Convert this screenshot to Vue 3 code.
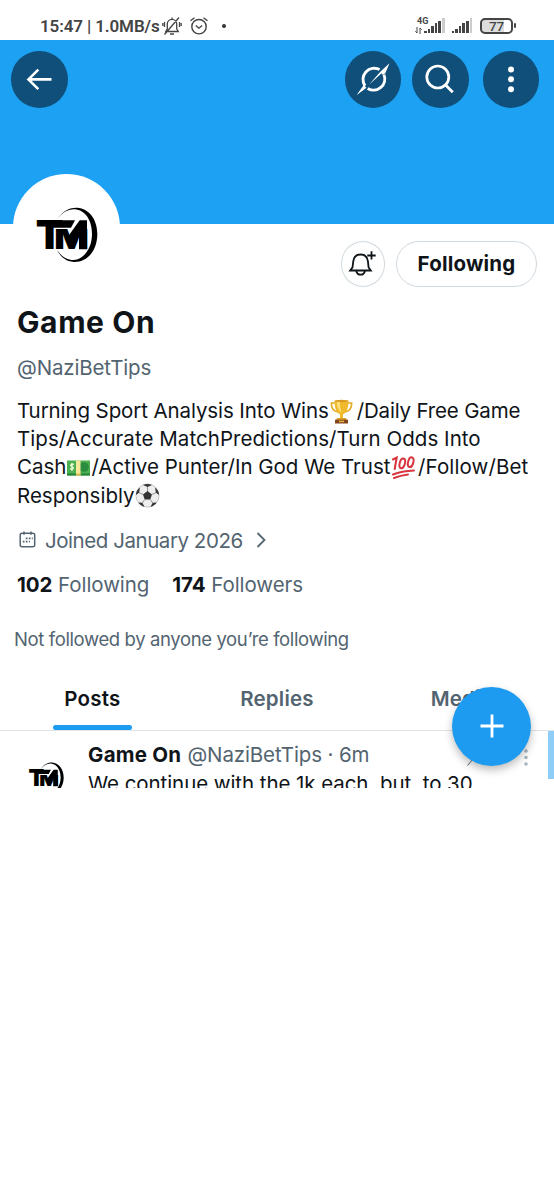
<script setup>
const signal = [2, 4, 7, 10, 12.5]
</script>

<template>
  <main class="screen">
    <svg width="0" height="0" class="defs">
      <symbol id="tm-logo" viewBox="100 135 200 175">
        <text class="logo-t" x="108" y="268" textLength="83" lengthAdjust="spacingAndGlyphs">T</text>
        <path d="M150 181H226L214 203H150Z" />
        <text class="logo-m" x="164" y="268" textLength="104" lengthAdjust="spacingAndGlyphs">M</text>
        <path d="M240 181H262V268H238V222L215 250L204 231L212 220Z" />
        <path d="M172 178C190 150 215 142 232 143C270 146 293 180 293 222C293 270 265 306 225 306C200 306 182 290 172 270C190 295 205 300 222 300C255 298 277 262 277 222C277 180 256 150 225 148C205 147 188 158 172 178Z" />
      </symbol>
    </svg>

    <div class="status">
      <span class="clock">15:47 | 1.0MB/s</span>
      <svg class="mute" width="20" height="20" viewBox="0 0 20 20" fill="none" stroke="#444" stroke-width="1.3">
        <path d="M3.8 15.5h12.5l-1.6-2.7V8a4.7 4.7 0 0 0-9.4 0v4.8zM10 3.2V1.5M8 18h4M17 1.5 2.5 18.5M2.5 6v5M.8 7v3M17.5 6v5M19.2 7v3" />
      </svg>
      <svg class="alarm" width="20" height="20" viewBox="0 0 20 20" fill="none" stroke="#444" stroke-width="1.4">
        <circle cx="10" cy="10.7" r="7.2" /><path d="m6.8 9.5 3.1 2.7 3.3-2.7M1.5 4.8 5.5 1.7M18.5 4.8l-4-3.1" />
      </svg>
      <i class="notice"></i>
      <div class="network"><b>4G</b>
        <svg width="7" height="7" viewBox="0 0 7 7" fill="none" stroke="#444"><path d="M2 0v6L.3 4.3M5 7V1l1.7 1.7" /></svg>
      </div>
      <div class="bars one"><i v-for="h in signal" :key="h" :style="{ height: h + 'px' }"></i><i class="off"></i></div>
      <div class="bars two"><i v-for="h in signal" :key="h" :style="{ height: h + 'px' }"></i><i class="off"></i></div>
      <div class="battery"><span>77</span></div>
    </div>

    <header class="banner">
      <button class="round">
        <svg width="56" height="56" viewBox="0 0 56 56" fill="none" stroke="#fff" stroke-width="2.6"><path d="M40.5 28.4H17.5M27.3 18.7 17.5 28.4l9.8 9.7" /></svg>
      </button>
      <button class="round grok">
        <svg width="56" height="56" viewBox="0 0 56 56" fill="none" stroke="#fff" stroke-width="2.9">
          <path d="M20 34.8A11.2 11.2 0 0 1 34.6 18.6M39 23.7A11.2 11.2 0 0 1 22.7 37.4" />
          <path d="M24 33.7 36 20 44.5 12.3 40.2 22.5 37.6 24 36.6 22.3ZM11.5 44.2 18.7 34 21.5 36.8Z" fill="#fff" stroke="none" />
        </svg>
      </button>
      <button class="round search">
        <svg width="56" height="56" viewBox="0 0 56 56" fill="none" stroke="#fff" stroke-width="2.7"><circle cx="25.8" cy="26" r="11" /><path d="m33.8 34.2 7 7" /></svg>
      </button>
      <button class="round more">
        <svg width="56" height="56" viewBox="0 0 56 56" fill="#fff"><circle cx="28" cy="18.5" r="3" /><circle cx="28" cy="28.3" r="3" /><circle cx="28" cy="38.2" r="3" /></svg>
      </button>
      <div class="avatar"><svg width="66.7" height="58.3"><use href="#tm-logo" /></svg></div>
    </header>

    <section class="actions">
      <button class="bell">
        <svg width="44" height="44" viewBox="0 0 44 44" fill="none" stroke="#0f1419" stroke-width="1.8">
          <path d="M9.2 28.5h20.6l-2.2-3.1-.7-6.2c-.6-4.3-3.3-6.7-7.3-6.7s-6.8 2.4-7.3 6.7l-.8 6.2zM15.2 28.7c.6 2.7 2.3 4 4.4 4s3.8-1.3 4.4-4M30.5 9.3v8.3M26.3 13.5h8.4" />
        </svg>
      </button>
      <button class="follow">Following</button>
    </section>

    <section class="profile">
      <h1>Game On</h1>
      <div class="handle">@NaziBetTips</div>
      <div class="bio">
        <p><span class="l1">Turning Sport Analysis Into Wins</span>
          <svg class="emoji trophy" width="25" height="25" viewBox="0 0 25 25">
            <path d="M6.5 4H2.3c0 5.5 2.2 8.4 7 9M18.5 4h4.2c0 5.5-2.2 8.4-7 9" fill="none" stroke="#e3aa26" stroke-width="1.6" />
            <path d="M5.5 1.5h14c0 7-1.5 12.4-5.5 13.8V20h-3v-4.7C7 13.9 5.5 8.5 5.5 1.5z" fill="#f0ba2d" /><path d="M8 2.5h3c0 5 .3 8 1.5 11C9.2 11.5 8 8 8 2.5z" fill="#ffe17c" />
            <ellipse cx="12.5" cy="2" rx="7" ry="1.2" fill="#d99b22" /><path d="M8 19h9l1 2H7z" fill="#dca12b" /><path d="M6 20.7h13V24.5H6z" fill="#85451c" /><path d="M10 21.7h5v1.5h-5z" fill="#e4b743" />
          </svg><span class="r1">/Daily Free Game</span></p>
        <p><span class="l2">Tips/Accurate MatchPredictions/Turn Odds Into</span></p>
        <p><span class="l3">Cash</span>
          <svg class="emoji" width="25" height="25" viewBox="0 0 25 25">
            <path d="M1 5.5h23v15H1z" fill="#4caf50" /><path d="M1 18.5h23v2H1z" fill="#27853d" /><circle cx="18" cy="12" r="4.8" fill="#298c3f" /><path d="M10 5.5h4.5v15H10z" fill="#f9e89b" /><path d="M10 18.5h4.5v2H10z" fill="#dabc53" />
            <path d="M8 9.5c-3-1.5-4.5 1-2 2.2s1.5 3.4-2 2M6 8v8" fill="none" stroke="#e9f6d2" stroke-width="1.3" />
          </svg><span class="m3">/Active Punter/In God We Trust</span>
          <svg class="emoji hundred" width="25" height="25" viewBox="0 0 25 25" fill="none" stroke="#d7353f" stroke-width="2" stroke-linecap="round">
            <path d="M2 4.5 5.7 2.5 3.7 14" /><ellipse cx="11.3" cy="8.4" rx="2.6" ry="5" transform="rotate(15 11.3 8.4)" /><ellipse cx="19.7" cy="7.2" rx="2.6" ry="5" transform="rotate(15 19.7 7.2)" /><path d="M2 19.5c6-2.5 13-3.7 21-4M3 23c4-1.7 9-3 14-3.6" />
          </svg><span class="r3">/Follow/Bet</span></p>
        <p><span class="l4">Responsibly</span>
          <svg class="emoji" width="25" height="25" viewBox="0 0 25 25">
            <circle cx="12.5" cy="12.5" r="11.6" fill="#eee" stroke="#999" stroke-width=".5" />
            <path d="m12.5 8 4.5 3.4-1.7 5.2H9.7L8 11.4zM8 1.9l4.5 2 4.5-2c-3-1.3-6-1.3-9 0zM1 12l3.2-2.4.7-5C2 7 1 9.5 1 12zM24 12l-3.2-2.4-.7-5C23 7 24 9.5 24 12zM3.3 19.5l4 .3 2.2 4c-2.5-.6-4.7-2-6.2-4.3zM21.7 19.5l-4 .3-2.2 4c2.5-.6 4.7-2 6.2-4.3z" fill="#333" />
            <path d="M12.5 3.5V8M8 11.4 4 9.7M17 11.4l4-1.7M9.7 16.6l-2.5 3.5M15.3 16.6l2.5 3.5" stroke="#777" stroke-width=".8" />
          </svg></p>
      </div>
      <div class="joined">
        <svg width="18" height="18" viewBox="0 0 18 18" fill="none" stroke="#536471" stroke-width="1.5"><rect x="1.2" y="2.3" width="14.5" height="13.5" rx="2" /><path d="M5 .5v3.2M12 .5v3.2" /><path d="M6.8 7.3h7M3.8 10.7h7" stroke-dasharray="1.7 1.3" stroke-width="1.7" /></svg>
        <span>Joined January 2026</span>
        <svg class="chevron" width="10" height="16" viewBox="0 0 10 16" fill="none" stroke="#536471" stroke-width="1.8"><path d="m1.5 1 7 7-7 7" /></svg>
      </div>
      <div class="counts"><span class="c1"><b>102</b> Following</span><span class="c2"><b>174</b> Followers</span></div>
      <div class="mutual">Not followed by anyone you’re following</div>
    </section>

    <nav class="tabs">
      <div class="tab active">Posts</div>
      <div class="tab replies">Replies</div>
      <div class="tab media">Media</div>
    </nav>

    <article class="post">
      <svg class="mini" width="38" height="33.3"><use href="#tm-logo" /></svg>
      <div class="content">
        <div class="author"><b>Game On</b><span>@NaziBetTips · 6m</span></div>
        <div class="message">We continue with the 1k each..but, to 30</div>
      </div>
      <svg class="slash" width="6" height="8" viewBox="0 0 6 8"><path d="M.5 7.5 6 1" stroke="#536471" stroke-width="1" /></svg>
      <svg class="dots" width="4" height="20" viewBox="0 0 4 20" fill="#aab6c0"><circle cx="2" cy="4" r="1.8" /><circle cx="2" cy="10.5" r="1.8" /><circle cx="2" cy="17" r="1.8" /></svg>
      <i class="edge"></i>
    </article>
    <button class="compose"><svg width="24" height="24" viewBox="0 0 24 24" stroke="#fff" stroke-width="2.8"><path d="M12 .5v23M.5 12h23" /></svg></button>
  </main>
</template>

<style>
body { background: #fff; }
</style>
<style scoped>
* { box-sizing: border-box; }
.screen { position: relative; width: 554px; height: 788px; overflow: hidden; background: #fff; color: #0f1419; font-family: Inter, "Noto Sans", sans-serif; font-size: 20.5px; white-space: nowrap; }
.defs { position: absolute; }
.logo-t { font: 900 120px Inter, sans-serif; }
.logo-m { font: 900 80px Inter, sans-serif; }
button { padding: 0; border: 0; font-family: inherit; }
svg { display: block; flex: none; }
.status { height: 40px; padding: 11px 0 0 40px; display: flex; align-items: center; color: #444; }
.clock { width: 122px; font: 600 17px Roboto, sans-serif; letter-spacing: -.12px; }
.alarm { margin-left: 7px; }
.notice { width: 4px; height: 4px; border-radius: 50%; background: #333; margin-left: 13px; }
.network { margin-left: 189px; width: 14px; height: 18px; position: relative; font: 9px/9px Roboto, sans-serif; padding-left: 2px; }
.network svg { margin: 1px 0 0 -2px; }
.bars { height: 15px; display: flex; align-items: flex-end; gap: 1px; }
.bars i { width: 2.6px; background: #444; }
.bars .off { height: 15px; background: #ccc; }
.bars.one { margin-left: -5px; }
.bars.two { margin-left: 7px; }
.battery { width: 33px; height: 16px; margin-left: 8px; border: 2px solid #444; border-radius: 5px; position: relative; background: linear-gradient(90deg, #ddd 77%, #fff 77%); font: 500 13.5px/12.5px Roboto, sans-serif; text-align: center; }
.battery::after { content: ""; position: absolute; right: -5px; top: 3px; width: 2px; height: 5px; background: #444; border-radius: 1px; }
.banner { position: relative; height: 184px; background: #1da1f2; display: flex; padding: 11px 0 0 11px; }
.round { width: 56.5px; height: 56.5px; border-radius: 50%; background: #0f4f7a; flex: none; }
.grok { margin-left: 277px; }
.search { margin-left: 11px; }
.more { margin-left: 14px; }
.avatar { position: absolute; left: 13px; top: 134px; width: 107px; height: 107px; border-radius: 50%; background: #fff; padding: 31px 0 0 20.3px; }
.actions { height: 76px; padding: 17px 17px 0 0; display: flex; justify-content: flex-end; gap: 11px; }
.bell { width: 44.5px; height: 45.5px; border-radius: 50%; border: 1.5px solid #cfd9de; background: #fff; display: flex; justify-content: center; align-items: center; }
.follow { width: 141px; height: 45.5px; border-radius: 23px; border: 1.5px solid #cfd9de; background: #fff; font-size: 20.5px; font-weight: 650; letter-spacing: .2px; color: #0f1419; }
.profile { height: 368px; padding-left: 17px; }
h1 { margin: 0; height: 44px; font-size: 30px; line-height: 44px; font-weight: 700; letter-spacing: .6px; }
.handle { height: 28px; line-height: 28px; margin-top: 10px; color: #536471; letter-spacing: -.15px; }
.bio { margin-top: 15px; }
.bio p { margin: 0; height: 28.2px; line-height: 28.2px; display: flex; align-items: center; }
.l1 { letter-spacing: -.1px; }
.r1 { letter-spacing: -.17px; }
.l2 { letter-spacing: .05px; }
.r3 { letter-spacing: .12px; }
.trophy, .hundred { margin-right: 3px; }
.hundred { margin-right: 2.5px; }
.joined { display: flex; align-items: center; height: 28px; margin-top: 16.5px; color: #536471; padding-left: 2px; }
.joined span { margin-left: 8px; letter-spacing: -.45px; }
.chevron { margin-left: 13px; }
.counts { display: flex; height: 28px; line-height: 28px; margin-top: 16.7px; color: #536471; letter-spacing: -.07px; }
.counts b { color: #0f1419; }
.c2 { margin-left: 23px; }
.mutual { margin: 28.3px 0 0 -3px; height: 24px; line-height: 24px; font-size: 18.5px; letter-spacing: -.38px; color: #536471; }
.tabs { height: 62.5px; border-bottom: 1px solid #dfe4e7; display: grid; grid-template-columns: repeat(3, 1fr); text-align: center; line-height: 61px; font-weight: 600; color: #536471; letter-spacing: .2px; }
.tab { position: relative; }
.active { color: #0f1419; }
.active::after { content: ""; position: absolute; width: 79px; height: 5px; border-radius: 3px; background: #1d9bf0; left: 53px; bottom: 0; }
.post { position: relative; height: 58px; display: flex; padding-left: 26.5px; }
.mini { margin-top: 30px; }
.content { margin: 10px 0 0 23.5px; }
.author { height: 28px; line-height: 28px; display: flex; gap: 6px; color: #536471; letter-spacing: -.12px; }
.author b { color: #0f1419; letter-spacing: .25px; }
.message { height: 28px; line-height: 29px; letter-spacing: -.07px; }
.slash { position: absolute; left: 467px; top: 27px; }
.dots { position: absolute; left: 524px; top: 16px; }
.edge { position: absolute; right: 0; top: 0; width: 6px; height: 48.5px; background: #8ecdf8; }
.compose { position: absolute; left: 452px; top: 686.5px; width: 79px; height: 79px; border-radius: 50%; background: #1d9bf0; box-shadow: 0 4px 8px #0004; display: flex; align-items: center; justify-content: center; }
</style>
